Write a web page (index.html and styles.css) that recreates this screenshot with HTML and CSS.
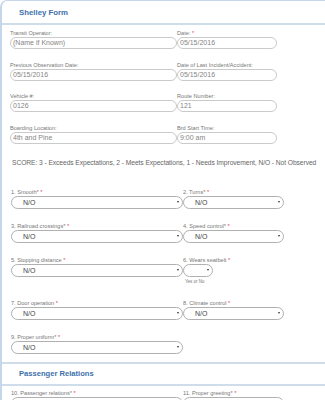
FILE: index.html
```
<!DOCTYPE html>
<html>

<head>
  <meta http-equiv="Content-Type" content="text/html; charset=utf-8" />
  <meta name="viewport" content="initial-scale=1.0, user-scalable=no" />
  <title>Shelley Form</title>
  <link rel="stylesheet" href="styles.css">
</head>

<body>
  <div class="form">
    <div class="section-head first">Shelley Form</div>

    <div class="text-grid">
      <div class="field">
        <label>Transit Operator:</label>
        <div class="input">(Name if Known)</div>
      </div>
      <div class="field">
        <label>Date: <span class="req">*</span></label>
        <div class="input">05/15/2016</div>
      </div>
      <div class="field">
        <label>Previous Observation Date:</label>
        <div class="input">05/15/2016</div>
      </div>
      <div class="field">
        <label>Date of Last Incident/Accident:</label>
        <div class="input">05/15/2016</div>
      </div>
      <div class="field">
        <label>Vehicle #:</label>
        <div class="input">0126</div>
      </div>
      <div class="field">
        <label>Route Number:</label>
        <div class="input">121</div>
      </div>
      <div class="field">
        <label>Boarding Location:</label>
        <div class="input">4th and Pine</div>
      </div>
      <div class="field">
        <label>Brd Start Time:</label>
        <div class="input">9:00 am</div>
      </div>
    </div>

    <p class="score">SCORE: 3 - Exceeds Expectations, 2 - Meets Expectations, 1 - Needs Improvement, N/O - Not Observed</p>

    <div class="select-grid">
      <div class="field">
        <label>1. Smooth* <span class="req">*</span></label>
        <div class="select"><span>N/O</span><i class="arrow"></i></div>
      </div>
      <div class="field">
        <label>2. Turns* <span class="req">*</span></label>
        <div class="select"><span>N/O</span><i class="arrow"></i></div>
      </div>
      <div class="field">
        <label>3. Railroad crossings* <span class="req">*</span></label>
        <div class="select"><span>N/O</span><i class="arrow"></i></div>
      </div>
      <div class="field">
        <label>4. Speed control* <span class="req">*</span></label>
        <div class="select"><span>N/O</span><i class="arrow"></i></div>
      </div>
      <div class="field">
        <label>5. Stopping distance <span class="req">*</span></label>
        <div class="select"><span>N/O</span><i class="arrow"></i></div>
      </div>
      <div class="field">
        <label>6. Wears seatbelt <span class="req">*</span></label>
        <div class="select small"><span></span><i class="arrow"></i></div>
        <div class="hint">Yes or No</div>
      </div>
      <div class="field">
        <label>7. Door operation <span class="req">*</span></label>
        <div class="select"><span>N/O</span><i class="arrow"></i></div>
      </div>
      <div class="field">
        <label>8. Climate control <span class="req">*</span></label>
        <div class="select"><span>N/O</span><i class="arrow"></i></div>
      </div>
      <div class="field">
        <label>9. Proper uniform* <span class="req">*</span></label>
        <div class="select"><span>N/O</span><i class="arrow"></i></div>
      </div>
    </div>

    <div class="section-head">Passenger Relations</div>

    <div class="select-grid second">
      <div class="field">
        <label>10. Passenger relations* <span class="req">*</span></label>
        <div class="select"><span>N/O</span><i class="arrow"></i></div>
      </div>
      <div class="field">
        <label>11. Proper greeting* <span class="req">*</span></label>
        <div class="select"><span>N/O</span><i class="arrow"></i></div>
      </div>
    </div>
  </div>
</body>

</html>
```

FILE: styles.css
```
html,
body {
  margin: 0;
  padding: 0;
  background: #fff;
  overflow: hidden;
}

body {
  font-family: "Liberation Sans", Arial, sans-serif;
  color: #666;
}

.form {
  border-left: 2px solid #c6d7ec;
  border-top: 1px solid #c6d7ec;
  border-top-left-radius: 7px;
  min-height: 600px;
}

.section-head {
  display: flex;
  align-items: center;
  height: 20px;
  padding-left: 17px;
  border-top: 2px solid #cfdcea;
  border-bottom: 2px solid #cfdcea;
  font-size: 7.6px;
  font-weight: bold;
  color: #3d71ab;
  white-space: nowrap;
}

.section-head.first {
  height: 22px;
  border-top: none;
  font-size: 7.8px;
}

.field label {
  display: block;
  height: 7px;
  line-height: 7px;
  font-size: 5.6px;
  color: #777;
  white-space: nowrap;
}

.req {
  color: #e5423c;
}

.text-grid {
  display: grid;
  grid-template-columns: 167px 100px;
  row-gap: 12.5px;
  padding: 5px 0 0 8px;
}

.input {
  box-sizing: border-box;
  height: 12px;
  line-height: 10px;
  padding-left: 2px;
  border: 1px solid #cacaca;
  border-radius: 6px;
  font-size: 7px;
  color: #858585;
  white-space: nowrap;
}

.score {
  margin: 15px 0 0 10px;
  line-height: 8px;
  font-size: 6.7px;
  letter-spacing: -0.07px;
  color: #666;
  white-space: nowrap;
}

.select-grid {
  display: grid;
  grid-template-columns: 172px 101px;
  row-gap: 14px;
  padding: 22px 0 8px 9px;
  align-items: start;
}

.select-grid.second {
  padding-top: 4px;
}

.select {
  box-sizing: border-box;
  display: flex;
  align-items: center;
  justify-content: space-between;
  height: 13px;
  padding: 0 3px 0 11px;
  border: 1px solid #b0b0b0;
  border-radius: 7px;
  background: #fff;
  font-size: 7px;
  color: #444;
}

.select.small {
  width: 30px;
}

.arrow {
  width: 0;
  height: 0;
  border-left: 1.5px solid transparent;
  border-right: 1.5px solid transparent;
  border-top: 2.5px solid #333;
}

.hint {
  margin-top: 1px;
  padding-left: 2px;
  line-height: 8px;
  font-size: 4.5px;
  color: #777;
}
```
